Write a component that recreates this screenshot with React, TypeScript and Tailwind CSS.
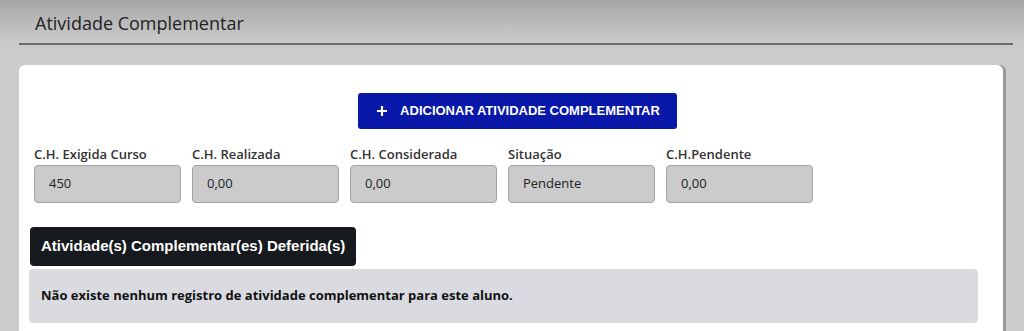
import React from "react";

const campos = [
  { label: "C.H. Exigida Curso", valor: "450" },
  { label: "C.H. Realizada", valor: "0,00" },
  { label: "C.H. Considerada", valor: "0,00" },
  { label: "Situação", valor: "Pendente" },
  { label: "C.H.Pendente", valor: "0,00" },
];

export default function App() {
  return (
    <div className="min-h-[331px] h-[331px] overflow-hidden bg-[#cbcbcb] bg-gradient-to-b from-[#a6a6a6] via-[#c9c9c9] via-[12%] to-[#cbcbcb] to-[14%] font-['Open_Sans',sans-serif]">
      <div className="pl-[19px] pr-[11px]">
        <div className="border-b-2 border-[#6b6b6b] pl-4 pt-[10px] h-[45px]">
          <h1 className="text-[18px] leading-[26px] text-[#222]">Atividade Complementar</h1>
        </div>
      </div>

      <div className="ml-[19px] mr-[21px] mt-[20px] bg-white rounded-t-md shadow-[3px_0_0_#9a9a9a] min-h-[300px] pl-[15px] pr-[24px] pt-[28px]">
        <div className="flex justify-center pl-[22px]">
          <button className="flex items-center gap-[12px] h-9 pl-[18px] pr-[17px] bg-[#0a18a9] rounded-[3px] text-white font-['Liberation_Sans',Arial,sans-serif] font-bold text-[13px]">
            <svg width="12" height="12" viewBox="0 0 12 12" className="shrink-0">
              <path d="M6 1v10M1 6h10" stroke="white" strokeWidth="2.2" />
            </svg>
            ADICIONAR ATIVIDADE COMPLEMENTAR
          </button>
        </div>

        <div className="flex gap-[11px] mt-[16px]">
          {campos.map((c) => (
            <div key={c.label} className="w-[147px] flex flex-col">
              <span className="text-[13px] font-semibold leading-[18px] text-[#333]">{c.label}</span>
              <div className="mt-[2px] h-[38px] rounded-[4px] border border-[#a3a3a3] bg-[#cbcbcb] flex items-center pl-[14px] text-[13px] text-[#222]">
                {c.valor}
              </div>
            </div>
          ))}
        </div>

        <div className="mt-[24px] -ml-[4px]">
          <div className="inline-flex items-center h-[39px] px-[11px] bg-[#16191d] rounded-[4px] text-white font-['Liberation_Sans',Arial,sans-serif] font-bold text-[15px]">
            Atividade(s) Complementar(es) Deferida(s)
          </div>
          <div className="mt-[3px] -ml-[1px] mr-[1px] h-[54px] bg-[#d9dbe1] rounded-[4px] flex items-center pl-[12px] text-[13px] font-bold text-[#111]">
            Não existe nenhum registro de atividade complementar para este aluno.
          </div>
        </div>
      </div>
    </div>
  );
}
